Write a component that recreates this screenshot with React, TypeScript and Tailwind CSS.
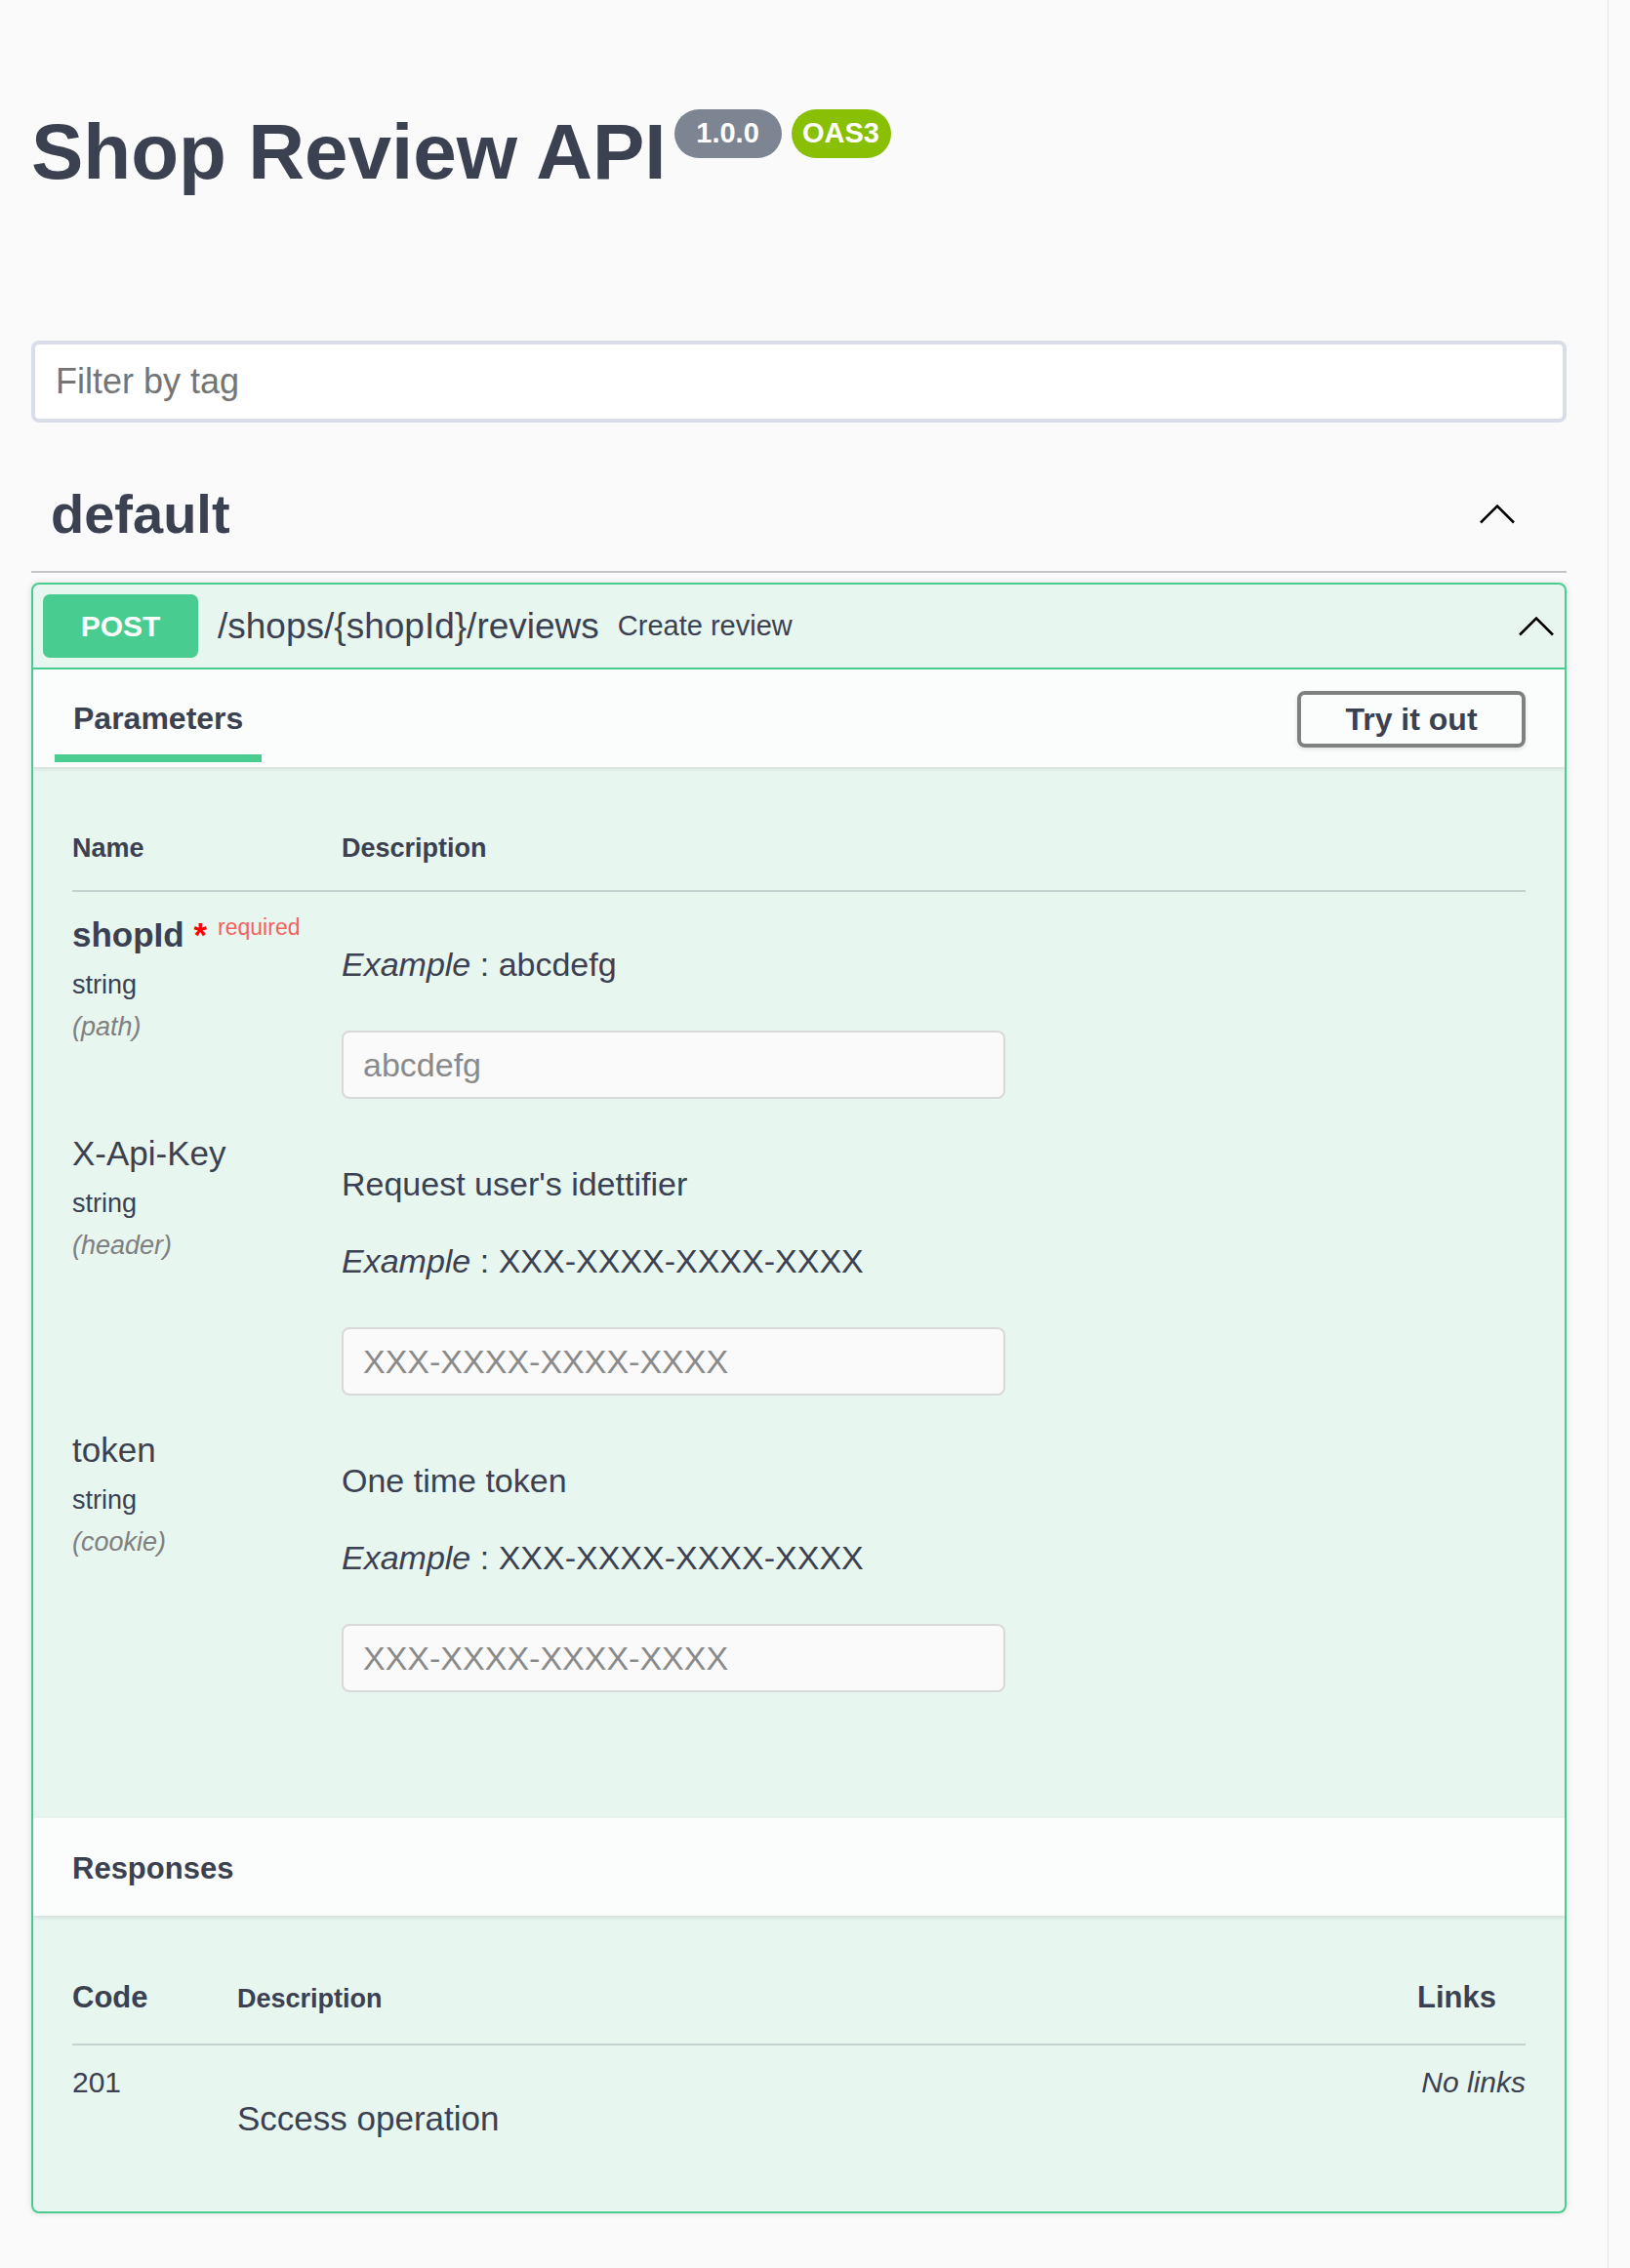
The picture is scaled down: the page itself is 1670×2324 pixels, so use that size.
import React from 'react';

const Chevron = () => (
    <svg width="36" height="20" viewBox="0 0 36 20" fill="none">
        <polyline points="1,18.5 18,1.5 35,18.5" stroke="#000" strokeWidth="2.5" />
    </svg>
);

const params = [
    {
        name: 'shopId',
        required: true,
        type: 'string',
        loc: '(path)',
        desc: '',
        example: 'abcdefg',
    },
    {
        name: 'X-Api-Key',
        required: false,
        type: 'string',
        loc: '(header)',
        desc: "Request user's idettifier",
        example: 'XXX-XXXX-XXXX-XXXX',
    },
    {
        name: 'token',
        required: false,
        type: 'string',
        loc: '(cookie)',
        desc: 'One time token',
        example: 'XXX-XXXX-XXXX-XXXX',
    },
];

const ParamRow = (props: any) => {
    const p = props.param;
    return (
        <div className={`flex ${props.first ? 'mt-[25px]' : 'mt-[38px]'}`}>
            <div className="w-[276px] shrink-0 flex flex-col">
                <div className={`text-[35px] leading-none ${p.required ? 'font-bold' : ''}`}>
                    {p.name}
                    {p.required && (
                        <>
                            <span className="text-[#ff0000]">{'\u00a0*'}</span>
                            <span className="pl-[11px] text-[23px] font-normal text-[#f46260] align-[12px]">
                                required
                            </span>
                        </>
                    )}
                </div>
                <div className="mt-[21px] text-[27px] leading-none">{p.type}</div>
                <div className="mt-[16px] text-[27px] leading-none italic text-[#808080]">{p.loc}</div>
            </div>
            <div className="flex-1 pt-[32px] flex flex-col items-start">
                {p.desc && <p className="text-[34px] leading-none mb-[45px]">{p.desc}</p>}
                <div className="text-[34px] leading-none">
                    <i>Example</i> : {p.example}
                </div>
                <input
                    placeholder={p.example}
                    className="mt-[51px] w-[680px] h-[70px] bg-[#fafafa] border-2 border-[#d9d9d9] rounded-[8px] pl-[20px] text-[34px] placeholder:text-[#8a8a8a] outline-none"
                />
            </div>
        </div>
    );
};

export default function App() {
    return (
        <div className="flex min-h-screen bg-[#fafafa] text-[#3b4151] font-['Liberation_Sans',Arial,sans-serif]">
            <div className="flex-1 pl-[32px] pr-[42px] pb-[56px]">
                {/* title */}
                <div className="pt-[116px] flex items-start">
                    <h1 className="text-[80px] leading-none font-bold">Shop Review API</h1>
                    <div className="ml-[8px] mt-[-4px] flex gap-[10px]">
                        <span className="w-[110px] h-[50px] rounded-full bg-[#7d8492] text-white text-[29px] font-bold flex items-center justify-center">
                            1.0.0
                        </span>
                        <span className="w-[102px] h-[50px] rounded-full bg-[#89bf04] text-white text-[29px] font-bold flex items-center justify-center">
                            OAS3
                        </span>
                    </div>
                </div>

                <input
                    placeholder="Filter by tag"
                    className="mt-[153px] w-full h-[84px] bg-white border-4 border-[#d8dde7] rounded-[8px] pl-[21px] text-[36px] placeholder:text-[#757575] outline-none"
                />

                {/* tag header */}
                <div className="mt-[66px] pb-[30px] border-b-2 border-[#c3c4c8] flex items-center justify-between pl-[20px] pr-[53px]">
                    <h3 className="text-[56px] leading-none font-bold">default</h3>
                    <Chevron />
                </div>

                {/* operation */}
                <div className="mt-[10px] border-2 border-[#49cc90] rounded-[8px] bg-[#e8f6f0] shadow-[0_0_6px_rgba(0,0,0,0.12)] overflow-hidden">
                    <div className="flex items-center pl-[10px] pr-[11px] py-[10px] border-b-2 border-[#49cc90]">
                        <span className="w-[159px] h-[65px] rounded-[7px] bg-[#49cc90] text-white text-[30px] font-bold flex items-center justify-center">
                            POST
                        </span>
                        <span className="ml-[20px] text-[37px] leading-none">/shops/{'{shopId}'}/reviews</span>
                        <span className="ml-[19px] text-[29px] leading-none">Create review</span>
                        <span className="ml-auto flex">
                            <Chevron />
                        </span>
                    </div>

                    <div className="h-[100px] bg-[#fbfdfc] shadow-[0_2px_4px_rgba(0,0,0,0.1)] flex justify-between pl-[22px] pr-[40px] relative">
                        <div className="mt-[34px] flex flex-col">
                            <span className="px-[19px] text-[32px] leading-none font-bold">Parameters</span>
                            <span className="mt-[21px] h-[8px] bg-[#49cc90]"></span>
                        </div>
                        <button className="mt-[22px] w-[234px] h-[58px] border-4 border-[#808080] rounded-[8px] text-[32px] font-bold shadow-[0_2px_4px_rgba(0,0,0,0.1)]">
                            Try it out
                        </button>
                    </div>

                    <div className="px-[40px] pt-[70px] pb-[129px]">
                        <div className="flex pb-[29px] border-b-2 border-[#c5d2d0] text-[27px] leading-none font-bold">
                            <div className="w-[276px]">Name</div>
                            <div>Description</div>
                        </div>
                        {params.map((p, i) => (
                            <ParamRow key={p.name} param={p} first={i === 0} />
                        ))}
                    </div>

                    <div className="h-[100px] bg-[#fbfdfc] shadow-[0_2px_4px_rgba(0,0,0,0.1)] pl-[40px] pt-[36px] relative">
                        <h4 className="text-[31px] leading-none font-bold">Responses</h4>
                    </div>

                    <div className="px-[40px] pt-[68px] pb-[78px]">
                        <div className="flex items-baseline pb-[32px] border-b-2 border-[#c5d2d0] font-bold leading-none">
                            <div className="w-[169px] text-[31px]">Code</div>
                            <div className="flex-1 text-[27px]">Description</div>
                            <div className="w-[111px] text-[31px]">Links</div>
                        </div>
                        <div className="flex mt-[23px]">
                            <div className="w-[169px] text-[30px] leading-none">201</div>
                            <div className="flex-1 pt-[34px] text-[35px] leading-none">Sccess operation</div>
                            <div className="w-[111px] text-right text-[30px] leading-none italic">No links</div>
                        </div>
                    </div>
                </div>
            </div>
            <div className="w-[23px] shrink-0 border-l border-[#e6e6e6] bg-[#fafafa]"></div>
        </div>
    );
}
